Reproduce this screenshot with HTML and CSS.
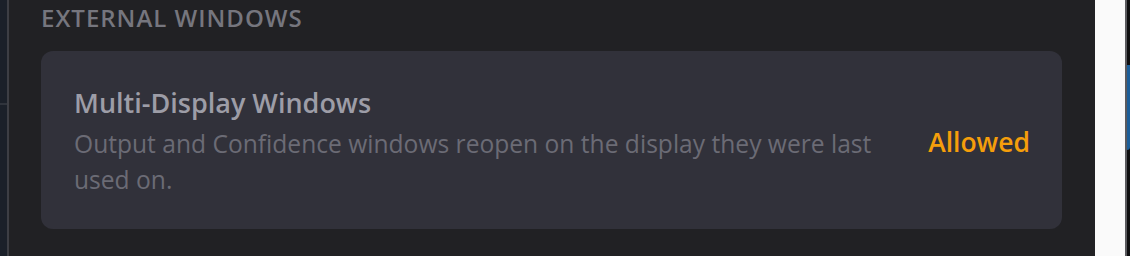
FILE: index.html
```html
<!DOCTYPE html>
<html lang="en">
<head>
<meta charset="utf-8">
<title>External Windows</title>
<link rel="stylesheet" href="styles.css">
</head>
<body>
<div class="app">
  <aside class="sidebar"><div class="sidebar-top"></div></aside>
  <main class="main">
    <h2 class="section-title">External Windows</h2>
    <div class="card">
      <div class="card-text">
        <div class="card-title">Multi-Display Windows</div>
        <p class="card-desc">Output and Confidence windows reopen on the display they were last used on.</p>
      </div>
      <div class="status">Allowed</div>
    </div>
  </main>
  <div class="panel"></div>
  <div class="edge"><div class="edge-blob"></div></div>
</div>
</body>
</html>
```
FILE: styles.css
```css
* { box-sizing: border-box; }
html, body { margin: 0; padding: 0; height: 100%; }
body {
  font-family: "Open Sans", "Noto Sans", sans-serif;
  background: #212124;
  overflow: hidden;
}
.app {
  display: flex;
  height: 256px;
}
.sidebar {
  width: 7px;
  flex: none;
  background: #1b2029;
  border-right: 2px solid #3d3e44;
  box-sizing: content-box;
}
.sidebar-top {
  height: 105px;
  border-bottom: 2px solid #30343c;
}
.main {
  flex: 1;
  background: #212124;
  padding: 0 33px 0 32px;
}
.section-title {
  margin: 0;
  padding-top: 2px;
  font-size: 24px;
  line-height: 32px;
  font-weight: 600;
  text-transform: uppercase;
  color: #76767e;
  letter-spacing: 1px;
}
.card {
  margin-top: 17px;
  height: 178px;
  background: #31313a;
  border-radius: 12px;
  padding: 0 32px 0 33px;
  display: flex;
  align-items: center;
  gap: 48px;
}
.card-text {
  flex: 1;
  padding-top: 2px;
}
.card-title {
  font-size: 27px;
  line-height: 36px;
  font-weight: 600;
  color: #9d9da7;
}
.card-desc {
  margin: 5px 0 0;
  font-size: 24.6px;
  line-height: 36px;
  color: #6b6b75;
}
.status {
  flex: none;
  padding-top: 3px;
  font-size: 26.5px;
  font-weight: 600;
  color: #f59e0b;
}
.panel {
  width: 30px;
  flex: none;
  background: #fafafa;
}
.edge {
  width: 5px;
  flex: none;
  background: #0f0f10;
  border-left: 2px solid #5a5a5e;
  position: relative;
}
.edge-blob {
  position: absolute;
  left: 0;
  top: 65px;
  width: 3px;
  height: 85px;
  background: #1c5e99;
  border-radius: 0 0 3px 0;
}
```
